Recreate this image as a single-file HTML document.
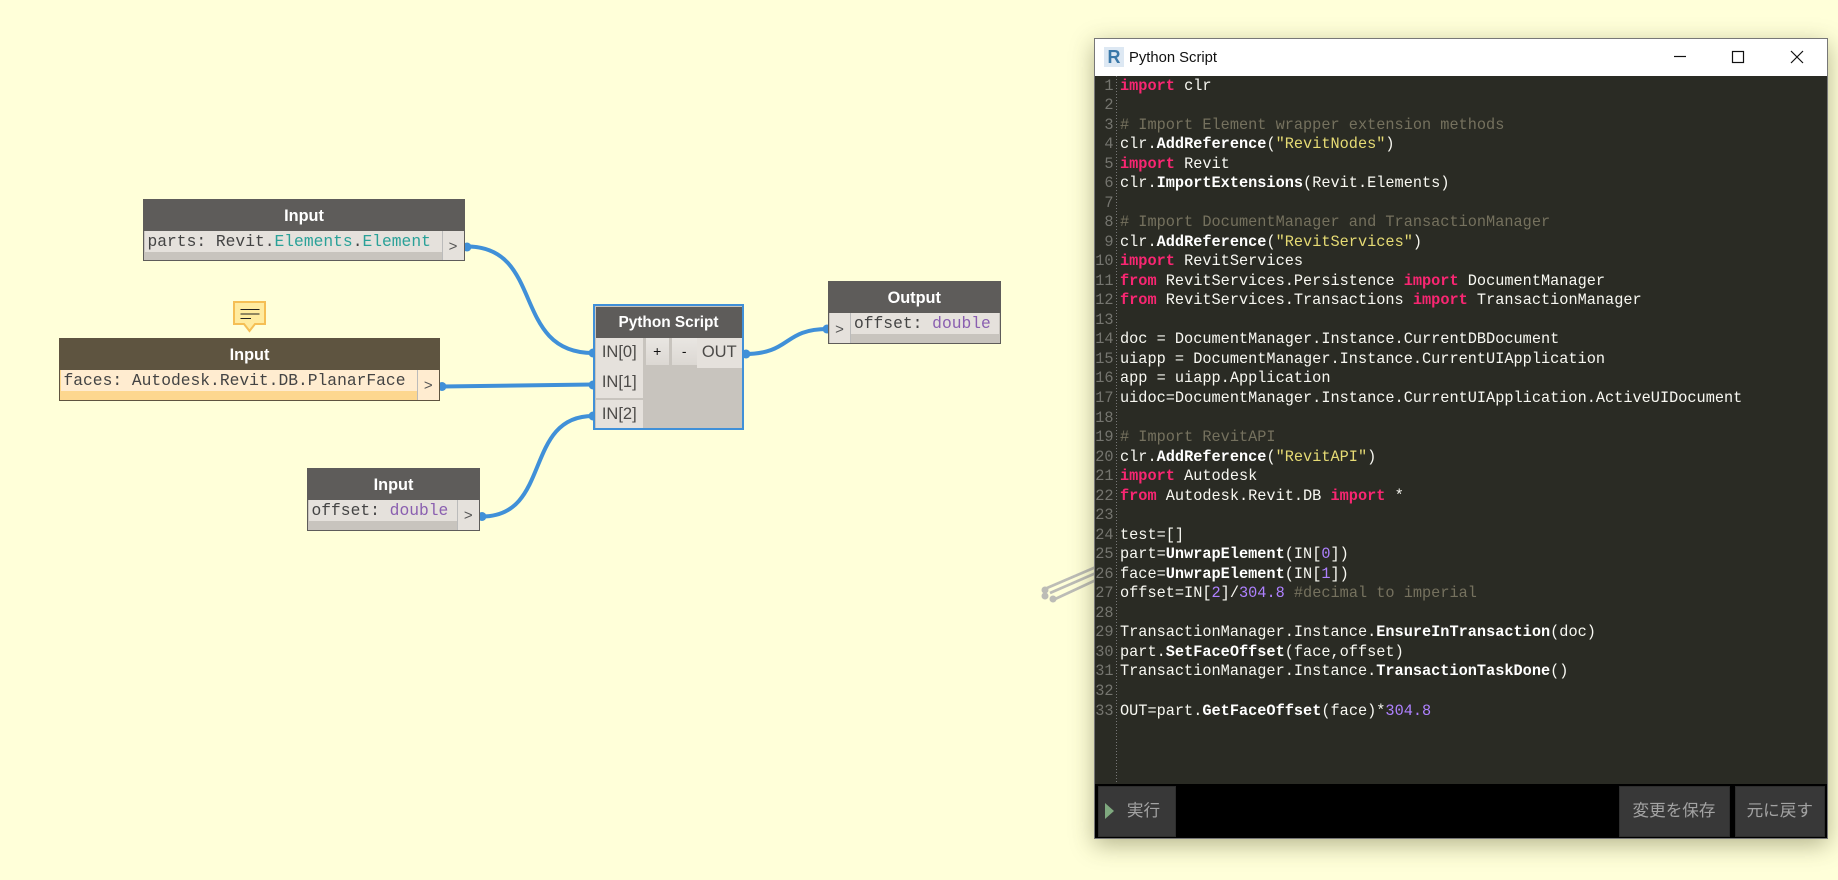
<!DOCTYPE html>
<html><head><meta charset="utf-8"><style>
html,body{margin:0;padding:0}
body{width:1838px;height:880px;background:#ffffd9;position:relative;overflow:hidden;font-family:"Liberation Sans",sans-serif}
.a{position:absolute;box-sizing:border-box}
.hd{color:#fff;font-weight:bold;font-size:16.3px;text-align:center;white-space:nowrap}
.mono{font-family:"Liberation Mono",monospace;font-size:16.3px;color:#444;white-space:pre;line-height:21px}
.chev{font-family:"Liberation Sans",sans-serif;font-size:15px;color:#555;text-align:center}
.port{font-size:16.5px;color:#4c4a48;text-align:center;background:#e5e1dc;line-height:29px}
#code{left:1120px;top:76.5px;font-family:"Liberation Mono",monospace;font-size:15.26px;line-height:19.53px;color:#f8f8f2;white-space:pre}
#nums{left:1095px;width:18.5px;top:76.5px;font-family:"Liberation Mono",monospace;font-size:15.26px;line-height:19.53px;color:#75756f;text-align:right;white-space:pre}
.k{color:#f92672;font-weight:bold}.c{color:#75715e}.s{color:#e6db74}.n{color:#ae81ff}b{color:#fff}
.btn{background:#383838;border:1px solid #2e2e2e;color:#a3a3a3;font-size:16.6px;font-family:"Liberation Sans","Noto Sans CJK JP",sans-serif;text-align:center;line-height:48px;top:786px;height:51px}
</style></head><body>
<svg class="a" style="left:0;top:0" width="1838" height="880" fill="none" stroke="#4090d8" stroke-width="4">
<path d="M467 246.500C545 246.500 511 353 593 353"/>
<path d="M442 386.500L593 384.500"/>
<path d="M482 516.500C552 516.500 523 416 593 416"/>
<path d="M744 354C792 354 782 329 828 329"/>
<g fill="#4090d8" stroke="none"><circle cx="467" cy="247" r="4.500"/><circle cx="442" cy="386.500" r="4.500"/><circle cx="482" cy="516.500" r="4.500"/><circle cx="593" cy="353" r="4.500"/><circle cx="593" cy="385" r="4.500"/><circle cx="593" cy="416" r="4.500"/><circle cx="746" cy="354" r="4.500"/><circle cx="827" cy="329" r="4.500"/></g>
</svg>

<div class="a" style="left:143px;top:199px;width:322px;height:62px;background:#c8c4be;border:1.500px solid #5e5c5a"></div>
<div class="a hd" style="left:143px;top:199px;width:322px;height:32px;background:#5e5c5a;line-height:34px">Input</div>
<div class="a mono" style="left:145px;top:231px;width:296.500px;height:21px;background:#e5e1dc;padding-left:2.500px">parts: Revit.<span style="color:#2aa198">Elements</span>.<span style="color:#2aa198">Element</span></div>
<div class="a chev" style="left:441.500px;top:231px;width:22px;height:28.500px;background:#e5e1dc;border-left:1px solid #bbb;line-height:32px">&gt;</div>

<svg class="a" style="left:233px;top:301px" width="34" height="33" viewBox="0 0 34 33"><path d="M1 1H32V23H22L16.500 30L11 23H1Z" fill="#ffeb9f" stroke="#f5bf55" stroke-width="2"/><path d="M7.500 8.500H26.500M7.500 13H26.500M7.500 17.500H18" stroke="#222" stroke-width="1" fill="none"/></svg>

<div class="a" style="left:59px;top:338px;width:381px;height:63px;background:#fdd78f;border:1.500px solid #5e5440"></div>
<div class="a hd" style="left:59px;top:338px;width:381px;height:32px;background:#5e5440;line-height:34px">Input</div>
<div class="a mono" style="left:61px;top:370px;width:356.500px;height:21px;background:#ffecd0;padding-left:2.500px">faces: Autodesk.Revit.DB.PlanarFace</div>
<div class="a chev" style="left:417px;top:370px;width:21.500px;height:29.500px;background:#ffecd0;border-left:1px solid #bbb;line-height:32px">&gt;</div>

<div class="a" style="left:307px;top:468px;width:173px;height:63px;background:#c8c4be;border:1.500px solid #5e5c5a"></div>
<div class="a hd" style="left:307px;top:468px;width:173px;height:32px;background:#5e5c5a;line-height:34px">Input</div>
<div class="a mono" style="left:309px;top:500px;width:148px;height:21px;background:#e5e1dc;padding-left:2.500px">offset: <span style="color:#8a5fb0">double</span></div>
<div class="a chev" style="left:457px;top:500px;width:21.500px;height:29.500px;background:#e5e1dc;border-left:1px solid #bbb;line-height:32px">&gt;</div>

<div class="a" style="left:593px;top:304px;width:151px;height:126px;background:#c8c4be;border:2.500px solid #4090d8"></div>
<div class="a hd" style="left:595.500px;top:306.500px;width:146px;height:31.500px;background:#5e5c5a;line-height:31px;font-size:15.400px">Python Script</div>
<div class="a port" style="left:595.500px;top:338px;width:47.500px;height:29.500px">IN[0]</div>
<div class="a port" style="left:595.500px;top:368px;width:47.500px;height:30px">IN[1]</div>
<div class="a port" style="left:595.500px;top:400px;width:47.500px;height:27.500px">IN[2]</div>
<div class="a" style="left:645.500px;top:338px;width:23.500px;height:27px;background:linear-gradient(#e9e6e2,#dcd8d3);color:#111;font-size:14px;text-align:center;line-height:27px">+</div>
<div class="a" style="left:672px;top:338px;width:24.500px;height:27px;background:linear-gradient(#e9e6e2,#dcd8d3);color:#111;font-size:14px;text-align:center;line-height:27px">-</div>
<div class="a port" style="left:697px;top:338px;width:44.500px;height:29.500px">OUT</div>

<div class="a" style="left:828px;top:281px;width:172.500px;height:63px;background:#c8c4be;border:1.500px solid #5e5c5a"></div>
<div class="a hd" style="left:828px;top:281px;width:172.500px;height:32px;background:#5e5c5a;line-height:34px">Output</div>
<div class="a chev" style="left:829.500px;top:313px;width:21px;height:29.500px;background:#e5e1dc;border-right:1px solid #bbb;line-height:33px">&gt;</div>
<div class="a mono" style="left:851px;top:313px;width:148px;height:21px;background:#e5e1dc;padding-left:3px">offset: <span style="color:#8a5fb0">double</span></div>

<svg class="a" style="left:1036px;top:560px" width="62" height="50" fill="none" stroke="#bcbcb6" stroke-width="2.700"><path d="M11 28L60 7M14 33L60 13M17 40L60 20"/><g fill="#bcbcb6" stroke="none"><circle cx="9" cy="30" r="3.500"/><circle cx="9" cy="36" r="3.500"/><circle cx="17" cy="39" r="3.500"/></g></svg>

<div class="a" style="left:1094px;top:38px;width:733.500px;height:801px;background:#000;border:1px solid #777;box-shadow:0 6px 22px rgba(60,60,20,.38)"></div>
<div class="a" style="left:1095px;top:39px;width:731.500px;height:37px;background:#fff"></div>
<div class="a" style="left:1104px;top:47px;width:20px;height:20px;background:#dde8f3"></div>
<div class="a" style="left:1104px;top:44.500px;width:20px;height:24px;text-align:center;font-weight:bold;font-size:18px;line-height:24px;color:#3a78a8">R</div>
<div class="a" style="left:1129px;top:47px;font-size:14.800px;line-height:22px;color:#111;white-space:nowrap">Python Script</div>
<svg class="a" style="left:1670px;top:45px" width="140" height="24" fill="none" stroke="#111" stroke-width="1.200"><path d="M4 11.500H16"/><rect x="62.500" y="6.500" width="11" height="11"/><path d="M121 6L133 18M133 6L121 18"/></svg>

<div class="a" style="left:1095px;top:76px;width:731.500px;height:708px;background:#2a2b24"></div>
<div class="a" style="left:1116px;top:76px;width:1px;height:706px;background:repeating-linear-gradient(#777 0 1px,transparent 1px 3px)"></div>
<div class="a" id="nums">1
2
3
4
5
6
7
8
9
10
11
12
13
14
15
16
17
18
19
20
21
22
23
24
25
26
27
28
29
30
31
32
33</div>
<div class="a" id="code"><span class="k">import</span> clr

<span class="c"># Import Element wrapper extension methods</span>
clr.<b>AddReference</b>(<span class="s">"RevitNodes"</span>)
<span class="k">import</span> Revit
clr.<b>ImportExtensions</b>(Revit.Elements)

<span class="c"># Import DocumentManager and TransactionManager</span>
clr.<b>AddReference</b>(<span class="s">"RevitServices"</span>)
<span class="k">import</span> RevitServices
<span class="k">from</span> RevitServices.Persistence <span class="k">import</span> DocumentManager
<span class="k">from</span> RevitServices.Transactions <span class="k">import</span> TransactionManager

doc = DocumentManager.Instance.CurrentDBDocument
uiapp = DocumentManager.Instance.CurrentUIApplication
app = uiapp.Application
uidoc=DocumentManager.Instance.CurrentUIApplication.ActiveUIDocument

<span class="c"># Import RevitAPI</span>
clr.<b>AddReference</b>(<span class="s">"RevitAPI"</span>)
<span class="k">import</span> Autodesk
<span class="k">from</span> Autodesk.Revit.DB <span class="k">import</span> *

test=[]
part=<b>UnwrapElement</b>(IN[<span class="n">0</span>])
face=<b>UnwrapElement</b>(IN[<span class="n">1</span>])
offset=IN[<span class="n">2</span>]/<span class="n">304.8</span> <span class="c">#decimal to imperial</span>

TransactionManager.Instance.<b>EnsureInTransaction</b>(doc)
part.<b>SetFaceOffset</b>(face,offset)
TransactionManager.Instance.<b>TransactionTaskDone</b>()

OUT=part.<b>GetFaceOffset</b>(face)*<span class="n">304.8</span></div>

<div class="a btn" style="left:1097.500px;width:78px;padding-left:14px">実行</div>
<div class="a" style="left:1105px;top:803px;width:0;height:0;border-top:8.500px solid transparent;border-bottom:8.500px solid transparent;border-left:9px solid #7fa97f"></div>
<div class="a btn" style="left:1618.500px;width:111px">変更を保存</div>
<div class="a btn" style="left:1734.500px;width:90.500px">元に戻す</div>
</body></html>
